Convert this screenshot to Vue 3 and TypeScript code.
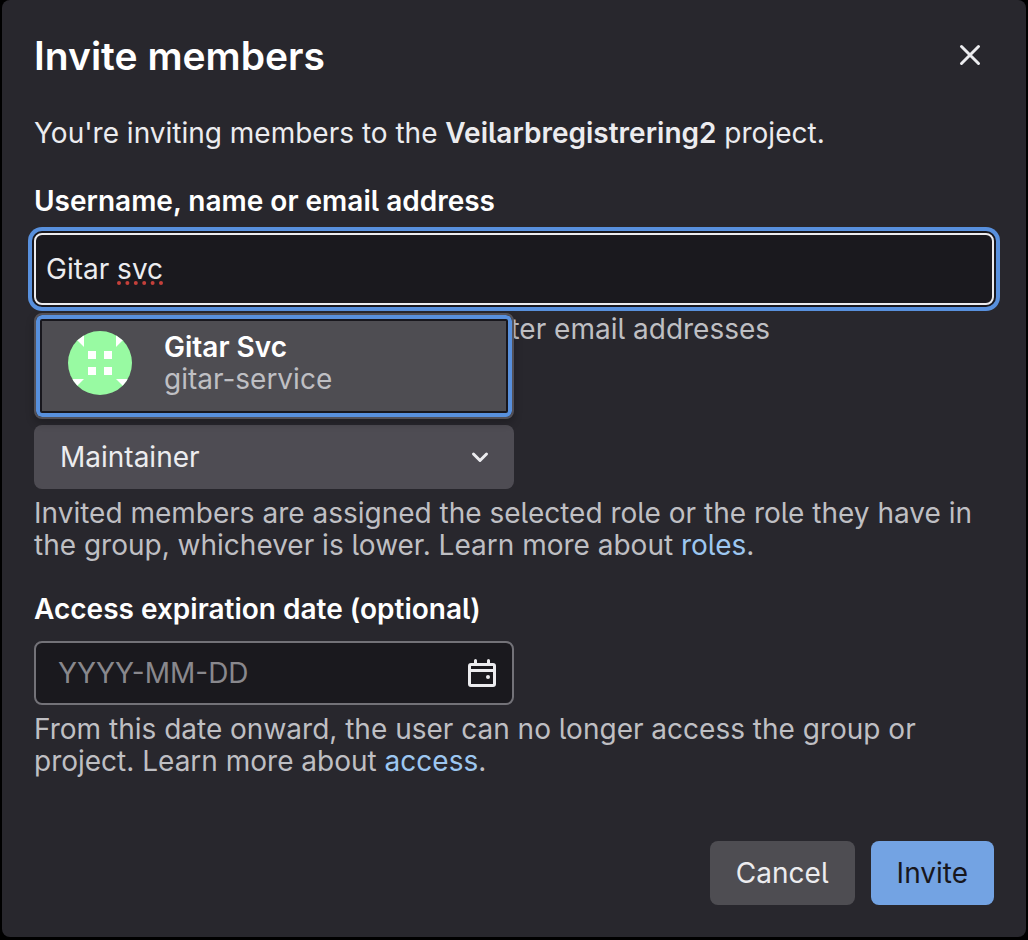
<script setup lang="ts">
import { ref } from 'vue'

interface Member {
  name: string
  username: string
}

const query = ref('Gitar svc')
const role = ref('Maintainer')
const expiresAt = ref('')
const roles: string[] = ['Guest', 'Reporter', 'Developer', 'Maintainer', 'Owner']
const results: Member[] = [{ name: 'Gitar Svc', username: 'gitar-service' }]
</script>

<template>
  <div class="modal" role="dialog" aria-labelledby="modal-title">
    <header class="header">
      <h2 id="modal-title" class="title">Invite members</h2>
      <button class="close" type="button" aria-label="Close">
        <svg viewBox="0 0 32 32" aria-hidden="true">
          <path d="M7.5 7.5 24.5 24.5M24.5 7.5 7.5 24.5" />
        </svg>
      </button>
    </header>

    <p class="intro">You're inviting members to the <strong>Veilarbregistrering2</strong> project.</p>

    <div class="field">
      <label class="label" for="member-search">Username, name or email address</label>
      <div class="combo">
        <input id="member-search" v-model="query" class="search" type="text" spellcheck="false" autocomplete="off" />
        <svg class="spelling" viewBox="0 0 48 4" aria-hidden="true">
          <circle v-for="n in 6" :key="n" :cx="n * 8.4 - 6.4" cy="2" r="2" />
        </svg>
        <ul class="results">
          <li v-for="member in results" :key="member.username">
            <button class="result" type="button">
              <svg class="avatar" viewBox="0 0 64 64" aria-hidden="true">
                <defs>
                  <clipPath id="avatar-circle"><circle cx="32" cy="32" r="32" /></clipPath>
                </defs>
                <g clip-path="url(#avatar-circle)">
                  <rect width="64" height="64" fill="#98faa2" />
                  <path
                    fill="#fff"
                    d="M0 0h16v16zM48 0h16L48 16zM0 48h16L0 64zM48 48h16v16zM20 20h8v8h-8zM36 20h8v8h-8zM20 36h8v8h-8zM36 36h8v8h-8z"
                  />
                </g>
              </svg>
              <span class="person">
                <span class="person-name">{{ member.name }}</span>
                <span class="person-handle">{{ member.username }}</span>
              </span>
            </button>
          </li>
        </ul>
      </div>
      <p class="help">Select from GitLab usernames or enter email addresses</p>
    </div>

    <div class="field">
      <label class="label" for="role">Select a role</label>
      <div class="control">
        <select id="role" v-model="role" class="select">
          <option v-for="option in roles" :key="option">{{ option }}</option>
        </select>
        <svg class="chevron" viewBox="0 0 32 32" aria-hidden="true">
          <path d="M9.5 13 16 19.5 22.5 13" />
        </svg>
      </div>
      <p class="help">
        Invited members are assigned the selected role or the role they have in the group, whichever is
        lower. Learn more about <a href="#roles">roles</a>.
      </p>
    </div>

    <div class="field">
      <label class="label" for="expires">Access expiration date (optional)</label>
      <div class="control">
        <input id="expires" v-model="expiresAt" class="date" type="text" placeholder="YYYY-MM-DD" autocomplete="off" />
        <button class="calendar" type="button" aria-label="Open calendar">
          <svg viewBox="0 0 32 32" aria-hidden="true">
            <rect x="3.5" y="7.5" width="25" height="21" rx="1.5" />
            <path d="M3.5 13.5h25M9.5 3.5v4M22.5 3.5v4" />
            <circle cx="22" cy="20" r="2" />
          </svg>
        </button>
      </div>
      <p class="help">
        From this date onward, the user can no longer access the group or project. Learn more about
        <a href="#access">access</a>.
      </p>
    </div>

    <footer class="footer">
      <button class="button" type="button">Cancel</button>
      <button class="button primary" type="button">Invite</button>
    </footer>
  </div>
</template>

<style>
body {
  background: #000;
}
</style>

<style scoped>
.modal {
  box-sizing: border-box;
  margin: 0 2px;
  padding: 32px;
  border-radius: 8px;
  background: #28272d;
  color: #ececef;
  font-family: Inter, "Liberation Sans", sans-serif;
  font-size: 28px;
  font-feature-settings: "cv05";
}

.modal button,
.modal input,
.modal select {
  box-sizing: border-box;
  margin: 0;
  font: inherit;
  font-feature-settings: inherit;
  color: inherit;
}

.header {
  display: flex;
  align-items: flex-start;
  justify-content: space-between;
}

.title {
  margin: 0;
  color: #fff;
  font-size: 39px;
  font-weight: 600;
  line-height: 48px;
}

.close {
  display: flex;
  padding: 7px 8px;
  border: 0;
  background: none;
}

.close svg {
  width: 32px;
  height: 32px;
  fill: none;
  stroke: #ececef;
  stroke-width: 3;
  stroke-linecap: round;
}

.intro {
  margin: 33px 0 28px;
  line-height: 40px;
}

.intro strong {
  font-weight: 600;
}

.field {
  margin-bottom: 28px;
}

.label {
  display: block;
  margin-bottom: 12px;
  color: #fff;
  font-weight: 600;
  line-height: 40px;
}

.combo {
  position: relative;
}

.search {
  display: block;
  width: 100%;
  height: 72px;
  padding: 0 10px;
  border: 2px solid #ececef;
  border-radius: 8px;
  outline: none;
  background: #1a191e;
  box-shadow: 0 0 0 2px #18171d, 0 0 0 6px #5890dd;
}

.spelling {
  position: absolute;
  left: 83px;
  top: 48px;
  width: 48px;
  height: 4px;
  fill: #c5403a;
}

.results {
  position: absolute;
  z-index: 1;
  top: 80px;
  left: 0;
  box-sizing: border-box;
  width: 50%;
  margin: 0;
  padding: 6px;
  border: 2px solid #535158;
  border-radius: 8px;
  background: #18171d;
  box-shadow: inset 0 0 0 4px #5890dd, 0 4px 8px rgba(0, 0, 0, 0.24);
  list-style: none;
}

.result {
  display: flex;
  align-items: flex-start;
  gap: 32px;
  width: 100%;
  padding: 10px 26px 16px;
  border: 0;
  background: #4e4d52;
  text-align: left;
}

.avatar {
  flex: none;
  width: 64px;
  height: 64px;
}

.person {
  display: flex;
  flex-direction: column;
  line-height: 32px;
}

.person-name {
  color: #fff;
  font-weight: 600;
}

.person-handle {
  color: #bfbfc3;
}

.help {
  margin: 8px 0 0;
  color: #bfbfc3;
  line-height: 32px;
}

.help a {
  color: #9dc7f1;
  text-decoration: none;
}

.control {
  position: relative;
  width: 50%;
}

.select {
  display: block;
  width: 100%;
  height: 64px;
  padding: 0 26px;
  border: 0;
  border-radius: 8px;
  appearance: none;
  background: #4e4c53;
}

.chevron {
  position: absolute;
  top: 16px;
  right: 18px;
  width: 32px;
  height: 32px;
  fill: none;
  stroke: #ececef;
  stroke-width: 3;
  stroke-linecap: round;
  stroke-linejoin: round;
  pointer-events: none;
}

.date {
  display: block;
  width: 100%;
  height: 64px;
  padding: 0 64px 0 22px;
  border: 2px solid #737278;
  border-radius: 8px;
  background: #1a191e;
}

.date::placeholder {
  color: #89888d;
  opacity: 1;
}

.calendar {
  position: absolute;
  top: 8px;
  right: 8px;
  display: flex;
  padding: 8px;
  border: 0;
  background: none;
}

.calendar svg {
  width: 32px;
  height: 32px;
  fill: none;
  stroke: #ececef;
  stroke-width: 3;
  stroke-linecap: round;
}

.calendar circle {
  fill: #ececef;
  stroke: none;
}

.footer {
  display: flex;
  justify-content: flex-end;
  gap: 16px;
  padding-top: 36px;
}

.button {
  height: 64px;
  padding: 0 26px;
  border: 0;
  border-radius: 8px;
  background: #4e4d52;
}

.modal .primary {
  background: #73a3e3;
  color: #18171d;
}
</style>
